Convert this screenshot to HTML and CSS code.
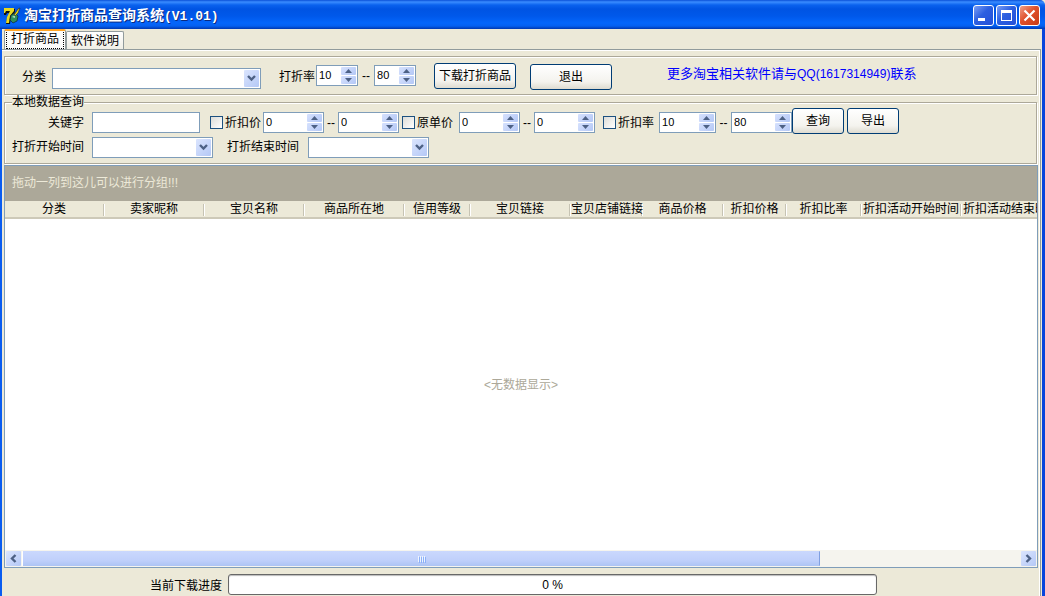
FILE: index.html
```html
<!DOCTYPE html>
<html lang="zh-CN">
<head>
<meta charset="utf-8">
<title>淘宝打折商品查询系统(V1.01)</title>
<link rel="stylesheet" href="styles.css">
</head>
<body>
<div class="window">
  <header class="titlebar">
    <svg class="logo" viewBox="0 0 18 18" aria-hidden="true">
      <path d="M1 2h11v3L8 10l-1 7H3l1-6 3-5H4L3 8H1z" fill="#111"/>
      <path d="M1 1h10v3L7 9l-1 7H3l1-6 3-6H3L2 6H1z" fill="#e8d820"/>
      <path d="M8 8l4-2 3 3-1 5-4 2-3-3z" fill="#2f8f5b" stroke="#123" stroke-width=".7"/>
      <path d="M9 10l3-2v3z" fill="#a9dcc0"/>
      <path d="M11 8l4-6 2-1-2 5-3 3z" fill="#e8d820" stroke="#222" stroke-width=".6"/>
    </svg>
    <h1 class="title">淘宝打折商品查询系统<span class="version">(V1.01)</span></h1>
    <button class="cap" type="button" aria-label="最小化"><svg viewBox="0 0 21 21"><path d="M5 13h7v3H5z" fill="#fff"/></svg></button>
    <button class="cap" type="button" aria-label="最大化"><svg viewBox="0 0 21 21"><path d="M5 5h11v11H5zM6 8v7h9V8z" fill="#fff" fill-rule="evenodd"/></svg></button>
    <button class="cap cap-close" type="button" aria-label="关闭"><svg viewBox="0 0 21 21"><path d="M5.500 5.500l10 10M15.500 5.500l-10 10" stroke="#fff" stroke-width="2.200"/></svg></button>
  </header>

  <div class="client">
    <nav class="tabs" role="tablist">
      <button class="tab tab-active" type="button" role="tab" aria-selected="true"><span class="focus">打折商品</span></button>
      <button class="tab" type="button" role="tab" aria-selected="false">软件说明</button>
    </nav>

    <main class="page">
      <section class="group download">
        <label class="download-label" for="category">分类</label>
        <span class="combo combo-wide"><select id="category"><option></option></select><svg viewBox="0 0 15 17"><path d="M4 6l3.500 3.500L11 6" /></svg></span>
        <label class="rate-label" for="rate-from">打折率</label>
        <span class="spin spin-small raised"><input id="rate-from" type="text" value="10"><span class="steps"><button type="button" aria-label="增加"><svg viewBox="0 0 15 8"><path d="M7.500 2L11 6H4z"/></svg></button><button type="button" aria-label="减少"><svg viewBox="0 0 15 8"><path d="M7.500 6L11 2H4z"/></svg></button></span></span>
        <span class="dash">--</span>
        <span class="spin spin-small raised"><input type="text" value="80" aria-label="打折率上限"><span class="steps"><button type="button" aria-label="增加"><svg viewBox="0 0 15 8"><path d="M7.500 2L11 6H4z"/></svg></button><button type="button" aria-label="减少"><svg viewBox="0 0 15 8"><path d="M7.500 6L11 2H4z"/></svg></button></span></span>
        <button class="btn btn-wide btn-first" type="button">下载打折商品</button>
        <button class="btn btn-wide btn-exit" type="button">退出</button>
        <p class="contact">更多淘宝相关软件请与<span class="qq">QQ(1617314949)</span>联系</p>
      </section>

      <fieldset class="group query">
        <legend>本地数据查询</legend>
        <div class="row row-main">
          <label class="lead" for="keyword">关键字</label>
          <input class="text" id="keyword" type="text">
          <label class="check check-first"><input type="checkbox">折扣价</label>
          <span class="spin"><input type="text" value="0" aria-label="折扣价下限"><span class="steps"><button type="button" aria-label="增加"><svg viewBox="0 0 15 8"><path d="M7.500 2L11 6H4z"/></svg></button><button type="button" aria-label="减少"><svg viewBox="0 0 15 8"><path d="M7.500 6L11 2H4z"/></svg></button></span></span>
          <span class="dash">--</span>
          <span class="spin"><input type="text" value="0" aria-label="折扣价上限"><span class="steps"><button type="button" aria-label="增加"><svg viewBox="0 0 15 8"><path d="M7.500 2L11 6H4z"/></svg></button><button type="button" aria-label="减少"><svg viewBox="0 0 15 8"><path d="M7.500 6L11 2H4z"/></svg></button></span></span>
          <label class="check check-price"><input type="checkbox">原单价</label>
          <span class="spin"><input type="text" value="0" aria-label="原单价下限"><span class="steps"><button type="button" aria-label="增加"><svg viewBox="0 0 15 8"><path d="M7.500 2L11 6H4z"/></svg></button><button type="button" aria-label="减少"><svg viewBox="0 0 15 8"><path d="M7.500 6L11 2H4z"/></svg></button></span></span>
          <span class="dash">--</span>
          <span class="spin"><input type="text" value="0" aria-label="原单价上限"><span class="steps"><button type="button" aria-label="增加"><svg viewBox="0 0 15 8"><path d="M7.500 2L11 6H4z"/></svg></button><button type="button" aria-label="减少"><svg viewBox="0 0 15 8"><path d="M7.500 6L11 2H4z"/></svg></button></span></span>
          <label class="check check-rate"><input type="checkbox">折扣率</label>
          <span class="spin spin-rate"><input type="text" value="10" aria-label="折扣率下限"><span class="steps"><button type="button" aria-label="增加"><svg viewBox="0 0 15 8"><path d="M7.500 2L11 6H4z"/></svg></button><button type="button" aria-label="减少"><svg viewBox="0 0 15 8"><path d="M7.500 6L11 2H4z"/></svg></button></span></span>
          <span class="dash">--</span>
          <span class="spin"><input type="text" value="80" aria-label="折扣率上限"><span class="steps"><button type="button" aria-label="增加"><svg viewBox="0 0 15 8"><path d="M7.500 2L11 6H4z"/></svg></button><button type="button" aria-label="减少"><svg viewBox="0 0 15 8"><path d="M7.500 6L11 2H4z"/></svg></button></span></span>
          <span class="actions"><button class="btn" type="button">查询</button><button class="btn" type="button">导出</button></span>
        </div>
        <div class="row">
          <label class="lead" for="start">打折开始时间</label>
          <span class="combo"><select id="start"><option></option></select><svg viewBox="0 0 15 17"><path d="M4 6l3.500 3.500L11 6" /></svg></span>
          <label class="end-label" for="end">打折结束时间</label>
          <span class="combo"><select id="end"><option></option></select><svg viewBox="0 0 15 17"><path d="M4 6l3.500 3.500L11 6" /></svg></span>
        </div>
      </fieldset>

      <section class="grid">
        <div class="group-bar">拖动一列到这儿可以进行分组!!!</div>
        <div class="head">
          <table class="columns">
            <colgroup><col class="w100"><col class="w100"><col class="w100"><col class="w100"><col class="w66"><col class="w100"><col class="w72"><col class="w81"><col class="w63"><col class="w75"><col class="w100"><col class="w100"></colgroup>
            <thead><tr><th>分类</th><th>卖家昵称</th><th>宝贝名称</th><th>商品所在地</th><th>信用等级</th><th>宝贝链接</th><th>宝贝店铺链接</th><th>商品价格</th><th>折扣价格</th><th>折扣比率</th><th>折扣活动开始时间</th><th>折扣活动结束时间</th></tr></thead>
          </table>
        </div>
        <div class="empty">&lt;无数据显示&gt;</div>
        <div class="scroll">
          <button class="scroll-btn" type="button" aria-label="向左"><svg viewBox="0 0 15 15"><path d="M9.500 4L6 7.500 9.500 11"/></svg></button>
          <div class="track"><div class="thumb"><i></i><i></i><i></i><i></i></div></div>
          <button class="scroll-btn" type="button" aria-label="向右"><svg viewBox="0 0 15 15"><path d="M5.500 4L9 7.500 5.500 11"/></svg></button>
        </div>
      </section>

      <footer class="status">
        <span class="status-label" id="progress-label">当前下载进度</span>
        <div class="progress" role="progressbar" aria-labelledby="progress-label" aria-valuenow="0" aria-valuemin="0" aria-valuemax="100">0 %</div>
      </footer>
    </main>
  </div>
</div>
</body>
</html>
```
FILE: styles.css
```css
* { box-sizing: border-box; }

body {
  margin: 0;
  background: #fff;
  color: #000;
  font: 12px/14px "Liberation Sans", "Noto Sans CJK SC", sans-serif;
}

button, input, select { margin: 0; padding: 0; font: inherit; color: inherit; }
svg { display: block; }

.window {
  display: flex;
  flex-direction: column;
  height: 100vh;
  overflow: hidden;
  background: #ece9d8;
}

/* Title bar */
.titlebar {
  display: flex;
  flex: none;
  align-items: center;
  gap: 2px;
  height: 29px;
  padding: 2px 5px 0 3px;
  border-radius: 0 5px 0 0;
  background: linear-gradient(#0a50d8 0, #3a8cff 2px, #0a62ee 5px, #0054e3 9px, #0058ea 16px, #0466fb 23px, #0460f0 26px, #0038b0 29px);
}
.logo { width: 18px; height: 18px; }
.title {
  flex: 1;
  margin: 0;
  padding-left: 1px;
  color: #fff;
  font-size: 14px;
  line-height: 18px;
  text-shadow: 1px 1px 0 #0a2a80;
}
.version { font: bold 13px/18px "Liberation Mono", monospace; }
.cap {
  width: 21px;
  height: 21px;
  border: 1px solid #fff;
  border-radius: 3px;
  background: linear-gradient(135deg, #7a9ef5, #2c5fe0 45%, #2450d8);
}
.cap svg { width: 21px; height: 21px; margin: -1px; }
.cap-close { background: linear-gradient(135deg, #f0a08a, #e0512c 45%, #c83a14); }

/* Client area and tabs */
.client {
  display: flex;
  flex: 1;
  flex-direction: column;
  min-height: 0;
  padding-right: 1px;
  border-right: 3px solid #0844dc;
  border-left: 2px solid #0a5cf0;
}
.tabs {
  display: flex;
  flex: none;
  align-items: flex-end;
  height: 20px;
  padding-left: 2px;
}
.tab {
  height: 18px;
  padding: 0 4px;
  border: 1px solid #919b9c;
  border-bottom: 0;
  border-radius: 2px 2px 0 0;
  background: linear-gradient(#fff, #f0efe6);
}
.tab-active {
  height: 20px;
  padding: 0 1px;
  border-top: 2px solid #ffa526;
  background: #fcfcfa;
}
.focus { display: block; padding: 0 4px 2px; border: 1px dotted #000; border-top: 0; }

.page {
  display: flex;
  flex: 1;
  flex-direction: column;
  min-height: 0;
  padding: 6px 2px 0 2px;
  border-top: 1px solid #919b9c;
  border-right: 1px solid #919b9c;
  box-shadow: inset -1px 1px 0 #fff;
}

/* Etched frames */
.group {
  flex: none;
  min-width: 0;
  margin: 0;
  padding: 0;
  border: 1px solid #aca899;
  box-shadow: 1px 1px 0 #fff, inset 1px 1px 0 #fff;
}
.download {
  display: flex;
  align-items: center;
  height: 39px;
  padding: 0 17px;
  margin-right: 1px;
}
.combo.combo-wide { width: 209px; margin: 5px 18px 0 6px; }
.rate-label { width: 37px; }
.rate-label, .download-label { padding-top: 3px; white-space: nowrap; }
.raised { margin-bottom: 1px; }
.btn-first { margin-left: 18px; }
.btn-exit { margin: 2px 55px 0 14px; }
.contact {
  margin: 0 0 4px;
  color: #00f;
  font-size: 13px;
  line-height: 16px;
  white-space: nowrap;
}
.qq { font-size: 12px; }

.query { margin: 1px 1px 0 0; padding-bottom: 3px; }
.query legend {
  margin-left: 7px;
  padding: 0;
  background: #ece9d8;
  line-height: 12px;
}
.row { display: flex; align-items: center; height: 26px; white-space: nowrap; }
.row-main label, .row-main .dash { padding-top: 3px; }
.lead { flex: none; width: 79px; margin-right: 8px; text-align: right; }
.end-label { margin: 0 9px 0 14px; }

/* Form controls */
.text, .combo, .spin {
  flex: none;
  height: 21px;
  border: 1px solid #7f9db9;
  background: #fff;
}
.text { width: 108px; margin-top: 2px; padding: 0 3px; }
.combo { position: relative; width: 121px; }
.combo select {
  display: block;
  width: 100%;
  height: 100%;
  border: 0;
  background: none;
  appearance: none;
}
.combo svg {
  position: absolute;
  top: 1px;
  right: 1px;
  width: 15px;
  height: 17px;
  border-radius: 1px;
  background: linear-gradient(135deg, #dbe5fe, #b4c8f6);
  pointer-events: none;
}
.combo path, .scroll-btn path { fill: none; stroke: #4d6185; stroke-width: 2.4; }

.spin { display: flex; width: 61px; padding: 1px; }
.spin-small { width: 42px; }
.spin-rate { width: 57px; }
.row .spin { margin-top: 2px; }
.spin input {
  flex: 1;
  min-width: 0;
  padding-left: 1px;
  border: 0;
  background: none;
  font-size: 11px;
}
.steps { display: flex; flex-direction: column; gap: 1px; width: 15px; }
.steps button {
  flex: 1;
  min-height: 0;
  border: 0;
  border-radius: 1px;
  background: linear-gradient(135deg, #d6e1fd, #b4c8f6);
}
.steps svg { width: 15px; height: 8px; fill: #4d6185; }
.dash { flex: none; width: 16px; padding-top: 1px; text-align: center; }
.row .dash { width: 14px; }
.spin-rate + .dash { width: 15px; }

.check { display: flex; flex: none; gap: 2px; align-items: center; }
.check input {
  width: 13px;
  height: 13px;
  border: 1px solid #1c5180;
  background: linear-gradient(135deg, #dcdcd7, #fff);
  appearance: none;
}
.check-first { margin: 0 2px 0 10px; }
.check-price { margin: 0 6px 0 3px; }
.check-rate { margin: 0 5px 0 8px; }

.btn {
  flex: none;
  width: 52px;
  height: 26px;
  border: 1px solid #003c74;
  border-radius: 3px;
  background: linear-gradient(#fff, #f4f3ee 70%, #dedbd0);
  white-space: nowrap;
}
.btn-wide { width: 82px; }
.actions { display: flex; gap: 3px; }

/* Data grid */
.grid {
  display: flex;
  flex: 1;
  flex-direction: column;
  min-height: 0;
  border: 1px solid #7f9db9;
  margin-top: 1px;
  background: #fff;
}
.group-bar {
  flex: none;
  height: 35px;
  padding-left: 7px;
  background: #aca899;
  color: #ece9d8;
  line-height: 35px;
}
.head {
  flex: none;
  overflow: hidden;
  border-bottom: 2px solid #cdc9b8;
  background: #ece9d8;
}
.columns { width: 1057px; table-layout: fixed; border-collapse: collapse; }
.columns th {
  height: 16px;
  padding: 0 2px 0 0;
  overflow: hidden;
  background: linear-gradient(#c6c3b3, #c6c3b3) right 1px top 3px / 1px 12px no-repeat,
    linear-gradient(#fff, #fff) right top 3px / 1px 12px no-repeat;
  font-weight: normal;
  text-align: center;
  white-space: nowrap;
}
.w100 { width: 100px; }
.w66 { width: 66px; }
.w72 { width: 72px; }
.w81 { width: 81px; }
.w63 { width: 63px; }
.w75 { width: 75px; }
.empty {
  display: flex;
  flex: 1;
  align-items: center;
  justify-content: center;
  color: #aca899;
}
.scroll { display: flex; flex: none; height: 17px; padding: 1px; background: #f5f4ee; }
.scroll-btn {
  width: 15px;
  height: 15px;
  border: 0;
  border-radius: 1px;
  background: linear-gradient(135deg, #dbe5fe, #b4c8f6);
}
.scroll-btn svg { width: 15px; height: 15px; }
.track { flex: 1; padding: 0 1px; }
.thumb {
  display: flex;
  align-items: center;
  justify-content: center;
  gap: 1px;
  width: 80%;
  height: 15px;
  border-right: 1px solid #7f9fe0;
  border-left: 1px solid #fff;
  border-radius: 1px;
  background: linear-gradient(#cad8fd, #c0d0fb 60%, #adc4f4);
}
.thumb i { width: 1px; height: 6px; background: #eef4fe; box-shadow: 1px 1px 0 #8cb0f8; }

/* Progress */
.status {
  display: flex;
  flex: none;
  gap: 6px;
  align-items: center;
  height: 28px;
  padding: 6px 161px 1px 146px;
  white-space: nowrap;
}
.status-label { padding-top: 2px; }
.progress {
  flex: 1;
  height: 21px;
  border: 1px solid #686868;
  border-radius: 3px;
  background: #fff;
  box-shadow: inset 0 1px 1px #bbb;
  line-height: 20px;
  text-align: center;
}
```
